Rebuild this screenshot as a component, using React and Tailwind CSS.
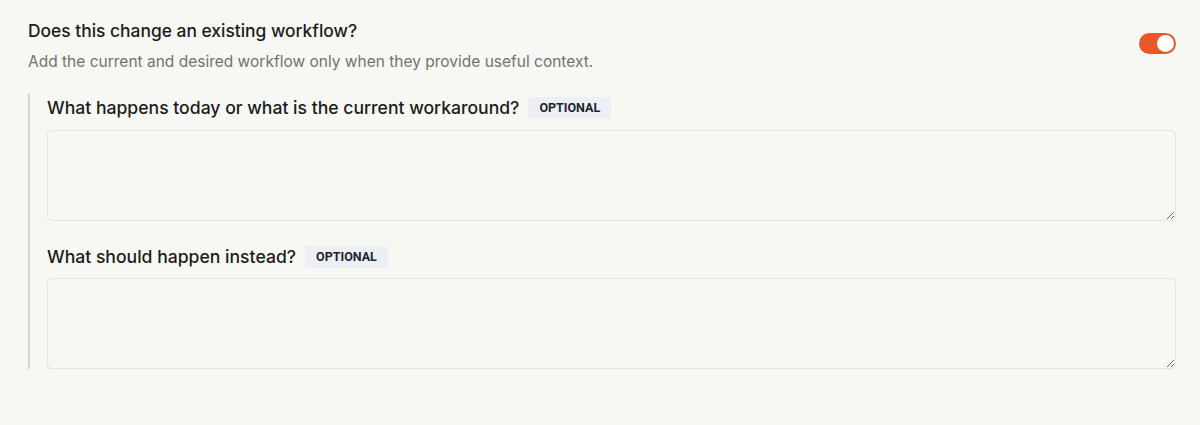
export default function App() {
  const font = { fontFamily: '"Inter", "Noto Sans", sans-serif' };
  const badge =
    "rounded-[3px] bg-[#eceff5] px-[11px] py-[3px] text-[12.5px] font-bold leading-[16px] text-[#1f2430] font-['Roboto',sans-serif]";
  return (
    <div className="min-h-[425px] w-[1200px] bg-[#f7f7f3] text-[#1c1c1c]" style={font}>
      <div className="pl-[28px] pr-[24px] pt-[19px]">
        <div className="flex items-start justify-between">
          <div>
            <div className="text-[17.4px] font-medium leading-[24px] text-[#1c1c1c]">
              Does this change an existing workflow?
            </div>
            <div className="mt-[8px] text-[15.5px] leading-[22px] text-[#75726c]">
              Add the current and desired workflow only when they provide useful context.
            </div>
          </div>
          <button className="mt-[14px] flex h-[21px] w-[37px] items-center justify-end rounded-full bg-[#e8582a] px-[2px]">
            <span className="block h-[17px] w-[17px] rounded-full bg-white" />
          </button>
        </div>
        <div className="mt-[21px] border-l-[2px] border-[#d6d5d0] pl-[17px]">
          <div className="flex items-center gap-[9px] pt-[2px]">
            <span className="text-[17.6px] font-medium leading-[24px]">
              What happens today or what is the current workaround?
            </span>
            <span className={badge}>OPTIONAL</span>
          </div>
          <textarea className="mt-[10px] block h-[91px] w-full rounded-[5px] border border-[#e2e4e6] bg-[#f7f7f3] outline-none" />
          <div className="mt-[24px] flex items-center gap-[9px]">
            <span className="text-[17.6px] font-medium leading-[24px]">What should happen instead?</span>
            <span className={badge}>OPTIONAL</span>
          </div>
          <textarea className="mt-[9px] block h-[91px] w-full rounded-[5px] border border-[#e2e4e6] bg-[#f7f7f3] outline-none" />
        </div>
      </div>
    </div>
  );
}
